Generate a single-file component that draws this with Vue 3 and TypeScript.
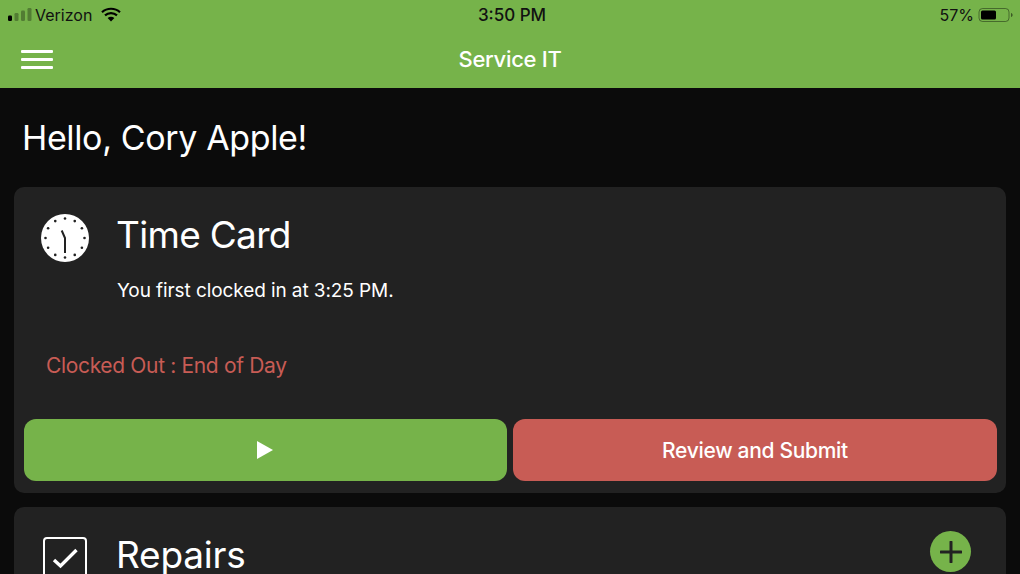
<script setup lang="ts">
const dots = Array.from({ length: 12 }, (_, i) => {
  const a = (i * Math.PI) / 6
  return { x: 24 + Math.sin(a) * 19.5, y: 24 - Math.cos(a) * 19.5 }
})
</script>

<template>
  <div class="screen">
    <header class="top">
      <div class="status">
        <div class="status-left">
          <svg class="signal" width="24" height="14" viewBox="0 0 24 14">
            <rect x="0" y="7.5" width="4" height="5.5" rx="1.2" fill="#000" />
            <rect x="6.5" y="5" width="4" height="8" rx="1.2" fill="#000" opacity=".3" />
            <rect x="13" y="2.5" width="4" height="10.5" rx="1.2" fill="#000" opacity=".3" />
            <rect x="19.5" y="0" width="4" height="13" rx="1.2" fill="#000" opacity=".3" />
          </svg>
          <span class="carrier">Verizon</span>
          <svg class="wifi" width="20" height="15" viewBox="0 0 20 15">
            <path d="M1 5.2C6 .6 14 .6 19 5.2" fill="none" stroke="#000" stroke-width="2.2" />
            <path d="M4 8.4C7.5 5.3 12.5 5.3 16 8.4" fill="none" stroke="#000" stroke-width="2.2" />
            <path d="M6.6 10.9C8.6 9.3 11.4 9.3 13.4 10.9L10 14.6Z" fill="#000" />
          </svg>
        </div>
        <span class="time">3:50 PM</span>
        <div class="status-right">
          <span class="pct">57%</span>
          <svg width="35" height="16" viewBox="0 0 35 16">
            <rect x="1" y="1.5" width="30" height="13" rx="3.5" fill="none" stroke="#000" stroke-opacity=".4" />
            <rect x="3" y="3.5" width="15" height="9" rx="1.5" fill="#000" />
            <path d="M33 6v4c1-.3 1.6-1 1.6-2S34 6.300 33 6Z" fill="#000" opacity=".5" />
          </svg>
        </div>
      </div>
      <div class="nav">
        <div class="burger"><i></i><i></i><i></i></div>
        <span class="title">Service IT</span>
      </div>
    </header>

    <main class="content">
      <h1 class="hello">Hello, Cory Apple!</h1>

      <section class="card">
        <div class="card-head">
          <svg class="clock" width="48" height="48" viewBox="0 0 48 48">
            <circle cx="24" cy="24" r="24" fill="#fff" />
            <circle v-for="(d, i) in dots" :key="i" :cx="d.x" :cy="d.y" r="1.300" fill="#222" />
            <path d="M24 39V24L20.700 16.500" fill="none" stroke="#222" stroke-width="2" />
          </svg>
          <div class="card-text">
            <h2 class="card-title">Time Card</h2>
            <p class="clocked-in">You first clocked in at 3:25 PM.</p>
          </div>
        </div>
        <p class="clocked-out">Clocked Out : End of Day</p>
        <div class="actions">
          <button class="btn play">
            <svg width="18" height="20" viewBox="0 0 18 20"><path d="M1 1v18l16-9Z" fill="#fff" /></svg>
          </button>
          <button class="btn review">Review and Submit</button>
        </div>
      </section>

      <section class="card repairs">
        <svg class="check" width="46" height="46" viewBox="0 0 46 46">
          <rect x="2" y="2" width="42" height="42" rx="3" fill="none" stroke="#fff" stroke-width="2" />
          <path d="M12 24l6.500 6L34.500 14" fill="none" stroke="#fff" stroke-width="3.400" />
        </svg>
        <h2 class="card-title">Repairs</h2>
        <div class="add">
          <svg width="22" height="22" viewBox="0 0 22 22">
            <path d="M11 1v20M1 11h20" stroke="#222" stroke-width="3" stroke-linecap="round" />
          </svg>
        </div>
      </section>
    </main>
  </div>
</template>

<style>
html, body { margin: 0; background: #0b0b0b; overflow: hidden; }
</style>

<style scoped>
.screen {
  width: 1020px;
  height: 574px;
  overflow: hidden;
  background: #0b0b0b;
  font-family: Inter, "Liberation Sans", sans-serif;
  color: #fff;
}
.top { height: 88px; background: #76b34a; }
.status {
  height: 29px;
  display: grid;
  grid-template-columns: 1fr auto 1fr;
  align-items: center;
  color: #111;
  font-size: 16px;
}
.status-left { display: flex; align-items: center; padding-left: 8px; }
.signal { margin-right: 3px; }
.wifi { margin-left: 9px; }
.time { font-weight: 500; font-size: 17px; margin-left: 4px; }
.status-right { display: flex; align-items: center; justify-content: flex-end; gap: 4px; padding-right: 7px; }
.nav {
  height: 59px;
  display: flex;
  align-items: center;
  justify-content: center;
  position: relative;
}
.burger {
  position: absolute;
  left: 21px;
  top: 21px;
  width: 32px;
  display: flex;
  flex-direction: column;
  gap: 5.500px;
}
.burger i { height: 2.500px; background: #fff; border-radius: 1px; }
.title { font-size: 22px; font-weight: 500; letter-spacing: -0.3px; margin-top: 1px; }
.content { padding: 0 14px; }
.hello {
  margin: 0;
  padding: 28px 0 27px 8px;
  font-size: 34px;
  line-height: 44px;
  font-weight: 400;
  letter-spacing: -0.36px;
}
.card {
  background: #222;
  border-radius: 10px;
  height: 306px;
  box-sizing: border-box;
  padding: 27px 9px 12px 10px;
  display: flex;
  flex-direction: column;
  margin-bottom: 14px;
}
.card-head { display: flex; gap: 28px; padding-left: 17px; }
.clock { flex: none; }
.card-text { margin: -1px 0 0 -1px; }
.card-title { margin: 0; font-size: 37px; line-height: 44px; font-weight: 400; letter-spacing: -0.7px; }
.clocked-in { margin: 22px 0 0 1px; font-size: 19px; line-height: 24px; letter-spacing: -0.09px; }
.clocked-out { margin: 49px 0 0 22px; font-size: 21px; line-height: 28px; color: #c85c55; letter-spacing: -0.34px; }
.actions { margin-top: auto; display: flex; gap: 6px; }
.btn {
  height: 62px;
  border: none;
  border-radius: 12px;
  color: #fff;
  font: 500 21px Inter, "Liberation Sans", sans-serif;
  letter-spacing: -0.3px;
  display: flex;
  align-items: center;
  justify-content: center;
  padding: 0;
}
.play { flex: 0 0 483px; background: #76b34a; }
.play svg { margin-right: 1px; }
.review { flex: 1; background: #c85c55; }
.repairs {
  flex-direction: row;
  align-items: flex-start;
  padding: 29px 35px 0 28px;
  gap: 28px;
}
.repairs .card-title { margin-top: -3px; letter-spacing: -0.2px; }
.check { flex: none; }
.add {
  margin-left: auto;
  margin-top: -5px;
  width: 41px;
  height: 41px;
  border-radius: 50%;
  background: #76b34a;
  display: flex;
  align-items: center;
  justify-content: center;
}
</style>
